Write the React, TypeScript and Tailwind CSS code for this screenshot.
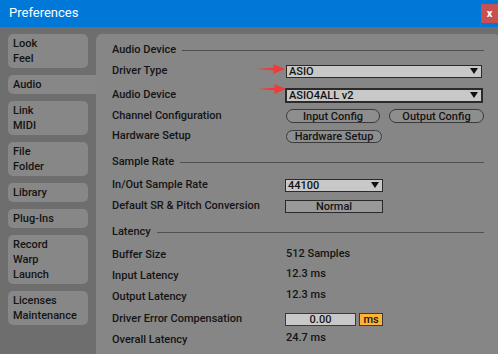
import React from "react";

const font = { fontFamily: 'Roboto, "Noto Sans", Arial, sans-serif' };

function Arrow() {
  return (
    <svg width="28" height="10" viewBox="0 0 28 10">
      <path d="M0 5 L17 3.6 L16 0 L28 5 L16 10 L17 6.4 Z" fill="#f03a3a" />
    </svg>
  );
}

function Tri() {
  return (
    <svg width="8" height="6" viewBox="0 0 8 6" className="shrink-0">
      <path d="M0 0 L8 0 L4 6 Z" fill="#111" />
    </svg>
  );
}

function Header({ title, h }: { title: string; h: string }) {
  return (
    <div className={`flex items-center ${h}`}>
      <span className="text-[11px] font-medium text-[#141414]">{title}</span>
      <div className="ml-[6px] h-px flex-1 bg-[#505050]" />
    </div>
  );
}

function Row({ label, h, children }: { label: string; h: string; children?: React.ReactNode }) {
  return (
    <div className={`flex items-center ${h}`}>
      <span className="w-[174px] shrink-0 text-[11px] font-medium text-[#141414]">{label}</span>
      <div className="flex items-center">{children}</div>
    </div>
  );
}

function Tab({ lines, active }: { lines: string[]; active?: boolean }) {
  return (
    <div
      className={`flex flex-col justify-center bg-[#878787] py-[2px] pl-[5px] ${
        active ? "w-[88px] rounded-l-[5px]" : "w-[80px] rounded-[5px]"
      }`}
    >
      {lines.map((l) => (
        <span key={l} className="text-[11px] font-medium leading-[15px] text-[#141414]">
          {l}
        </span>
      ))}
    </div>
  );
}

export default function App() {
  return (
    <div className="flex h-[354px] w-[498px] flex-col overflow-hidden bg-[#6e6e6e]" style={font}>
      <div className="flex h-[27px] shrink-0 items-start justify-between bg-[#0078d7]">
        <span className="pl-[9px] pt-[4px] text-[13px] leading-[18px] text-white">Preferences</span>
        <div className="mt-[4px] flex h-[19px] w-[17px] items-center justify-center bg-[#c75050] text-[11px] font-bold leading-none text-white">
          x
        </div>
      </div>
      <div className="flex flex-1 pt-[7px]">
        <div className="flex w-[96px] shrink-0 flex-col gap-[7px] pl-[8px]">
          <Tab lines={["Look", "Feel"]} />
          <Tab lines={["Audio"]} active />
          <Tab lines={["Link", "MIDI"]} />
          <Tab lines={["File", "Folder"]} />
          <Tab lines={["Library"]} />
          <Tab lines={["Plug-Ins"]} />
          <Tab lines={["Record", "Warp", "Launch"]} />
          <Tab lines={["Licenses", "Maintenance"]} />
        </div>
        <div className="relative mr-[4px] flex flex-1 flex-col rounded-t-[6px] bg-[#868686] pl-[16px] pr-[16px] pt-[6px]">
          <Header title="Audio Device" h="h-[20px]" />
          <Row label="Driver Type" h="h-[22px]">
            <div className="flex h-[13px] w-[196px] items-center justify-between border border-[#2a2a2a] bg-[#c8c8c8] pl-[2px] pr-[3px]">
              <span className="text-[11px] font-medium leading-none text-[#111]">ASIO</span>
              <Tri />
            </div>
          </Row>
          <Row label="Audio Device" h="h-[26px]">
            <div className="-ml-[1px] flex h-[15px] w-[198px] items-center justify-between border-2 border-[#2a2a2a] bg-[#c8c8c8] pl-[2px] pr-[3px]">
              <span className="text-[11px] font-medium leading-none text-[#111]">ASIO4ALL v2</span>
              <Tri />
            </div>
          </Row>
          <Row label="Channel Configuration" h="h-[16px]">
            <div className="flex gap-[9px]">
              <div className="flex h-[14px] w-[94px] items-center justify-center rounded-full border border-[#3a3a3a] bg-[#8e8e8e] text-[11px] font-medium leading-none text-[#141414]">
                Input Config
              </div>
              <div className="flex h-[14px] w-[95px] items-center justify-center rounded-full border border-[#3a3a3a] bg-[#8e8e8e] text-[11px] font-medium leading-none text-[#141414]">
                Output Config
              </div>
            </div>
          </Row>
          <Row label="Hardware Setup" h="h-[24px]">
            <div className="flex h-[13px] w-[96px] items-center justify-center rounded-full border border-[#3a3a3a] bg-[#8e8e8e] text-[11px] font-medium leading-none text-[#141414]">
              Hardware Setup
            </div>
          </Row>
          <Header title="Sample Rate" h="h-[28px]" />
          <Row label="In/Out Sample Rate" h="h-[18px]">
            <div className="-ml-[1px] flex h-[13px] w-[98px] items-center justify-between border border-[#2a2a2a] bg-[#c8c8c8] pl-[2px] pr-[3px]">
              <span className="text-[11px] font-medium leading-none text-[#111]">44100</span>
              <Tri />
            </div>
          </Row>
          <Row label="Default SR & Pitch Conversion" h="h-[24px]">
            <div className="-ml-[1px] flex h-[13px] w-[98px] items-center justify-center border border-[#2a2a2a] bg-[#999999] text-[11px] font-medium leading-none text-[#141414]">
              Normal
            </div>
          </Row>
          <Header title="Latency" h="h-[28px]" />
          <Row label="Buffer Size" h="h-[18px]">
            <span className="-mt-[2px] text-[11px] font-medium text-[#141414]">512 Samples</span>
          </Row>
          <Row label="Input Latency" h="h-[24px]">
            <span className="-mt-[3px] text-[11px] font-medium text-[#141414]">12.3 ms</span>
          </Row>
          <Row label="Output Latency" h="h-[18px]">
            <span className="-mt-[3px] text-[11px] font-medium text-[#141414]">12.3 ms</span>
          </Row>
          <Row label="Driver Error Compensation" h="h-[26px]">
            <div className="-ml-[1px] flex gap-[3px]">
              <div className="flex h-[13px] w-[71px] items-center justify-center border border-[#3a3a3a] bg-[#c8c8c8] text-[11px] font-medium leading-none text-[#141414]">
                0.00
              </div>
              <div className="flex h-[13px] w-[24px] items-center justify-center border border-[#3a3a3a] bg-[#ffb434] text-[11px] font-medium leading-none text-[#141414]">
                ms
              </div>
            </div>
          </Row>
          <Row label="Overall Latency" h="h-[16px]">
            <span className="-mt-[3px] text-[11px] font-medium text-[#141414]">24.7 ms</span>
          </Row>
          <div className="absolute left-[161px] top-[30px]">
            <Arrow />
          </div>
          <div className="absolute left-[162px] top-[50px]">
            <Arrow />
          </div>
        </div>
      </div>
    </div>
  );
}
